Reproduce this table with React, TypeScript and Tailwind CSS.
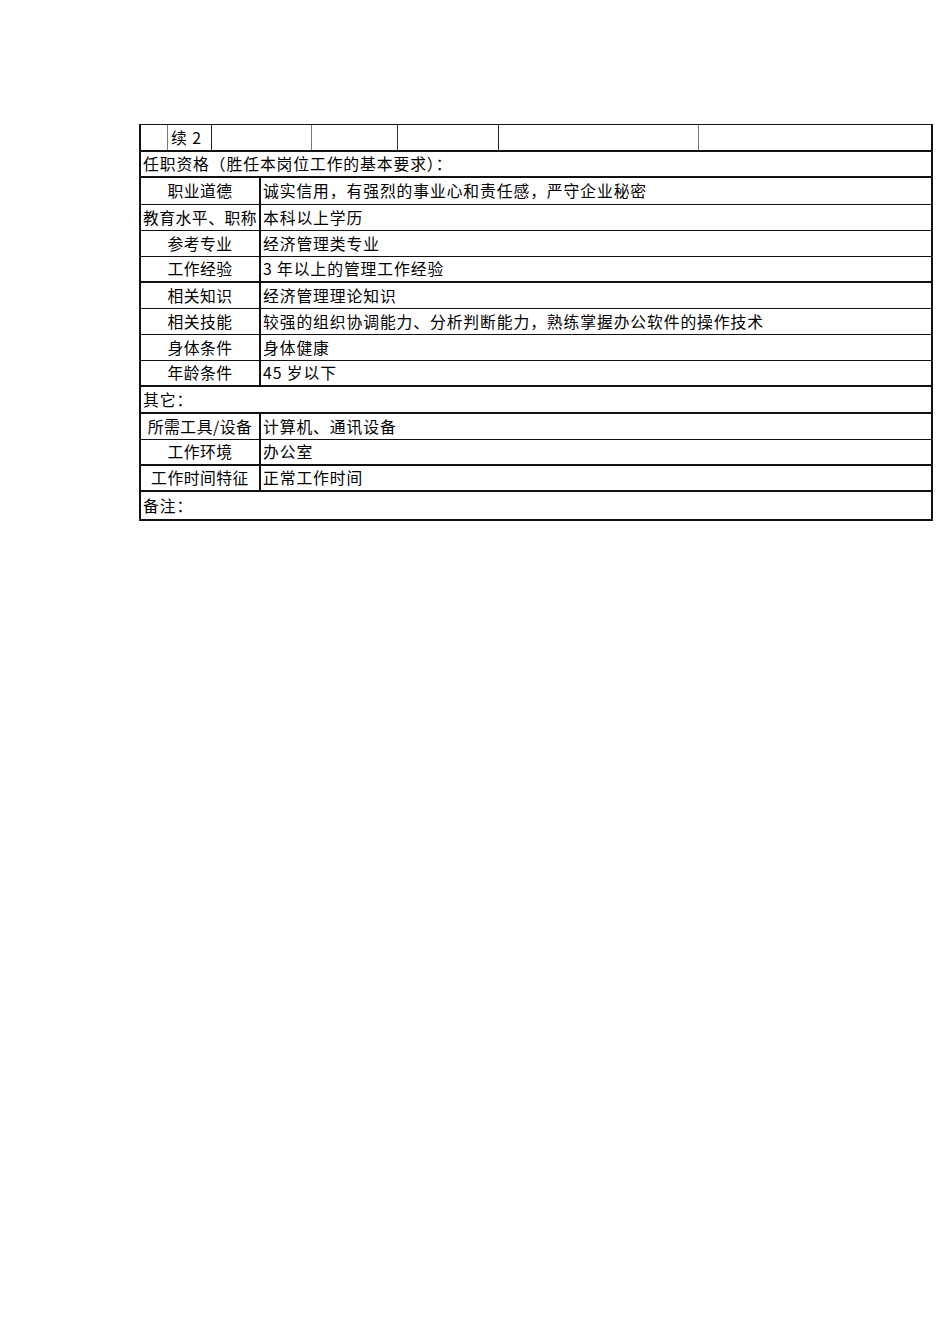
import React from "react";

const font = { fontFamily: '"Noto Sans CJK SC", "Noto Sans", sans-serif' };

type Row = { label: string; value: string; h: string; thick?: boolean };

function LabelRow({ label, value, h, thick }: Row) {
  return (
    <div className={`flex ${h} ${thick ? "border-b-2" : "border-b"} border-[#111]`}>
      <div className="w-[120px] shrink-0 border-r-2 border-[#111] flex items-center justify-center whitespace-nowrap">
        <span className="tracking-[0.5px]">{label}</span>
      </div>
      <div className="flex-1 flex items-center pl-[2px] whitespace-nowrap">{value}</div>
    </div>
  );
}

function FullRow({ text, h, thick }: { text: string; h: string; thick?: boolean }) {
  return (
    <div className={`flex items-center ${h} ${thick ? "border-b-2" : "border-b"} border-[#111] pl-[2px] whitespace-nowrap`}>
      {text}
    </div>
  );
}

export default function App() {
  return (
    <div className="w-[950px] h-[1344px] bg-white text-black" style={font}>
      <div className="pt-[124px] pl-[139px]">
        <div className="w-[794px] border-t border-l-2 border-r-2 border-b-2 border-[#111] text-[15.8px] tracking-[0.9px] leading-none">
          {/* Row 1 */}
          <div className="flex h-[27px] border-b-2 border-[#111]">
            <div className="w-[27px] border-r border-[#777]" />
            <div className="w-[44px] border-r border-[#222] flex items-center pl-[3px]">续 2</div>
            <div className="w-[100px] border-r border-[#777]" />
            <div className="w-[86px] border-r border-[#333]" />
            <div className="w-[101px] border-r border-[#222]" />
            <div className="w-[200px] border-r border-[#777]" />
            <div className="flex-1" />
          </div>
          <FullRow text="任职资格（胜任本岗位工作的基本要求）：" h="h-[26px]" thick />
          <LabelRow label="职业道德" value="诚实信用，有强烈的事业心和责任感，严守企业秘密" h="h-[27px]" />
          <LabelRow label="教育水平、职称" value="本科以上学历" h="h-[26px]" />
          <LabelRow label="参考专业" value="经济管理类专业" h="h-[26px]" />
          <LabelRow label="工作经验" value="3 年以上的管理工作经验" h="h-[26px]" thick />
          <LabelRow label="相关知识" value="经济管理理论知识" h="h-[26px]" />
          <LabelRow label="相关技能" value="较强的组织协调能力、分析判断能力，熟练掌握办公软件的操作技术" h="h-[26px]" />
          <LabelRow label="身体条件" value="身体健康" h="h-[26px]" />
          <LabelRow label="年龄条件" value="45 岁以下" h="h-[26px]" thick />
          <FullRow text="其它：" h="h-[27px]" thick />
          <LabelRow label="所需工具/设备" value="计算机、通讯设备" h="h-[26px]" />
          <LabelRow label="工作环境" value="办公室" h="h-[26px]" thick />
          <LabelRow label="工作时间特征" value="正常工作时间" h="h-[26px]" thick />
          <div className="flex items-center h-[27px] pl-[2px] whitespace-nowrap">备注：</div>
        </div>
      </div>
    </div>
  );
}
